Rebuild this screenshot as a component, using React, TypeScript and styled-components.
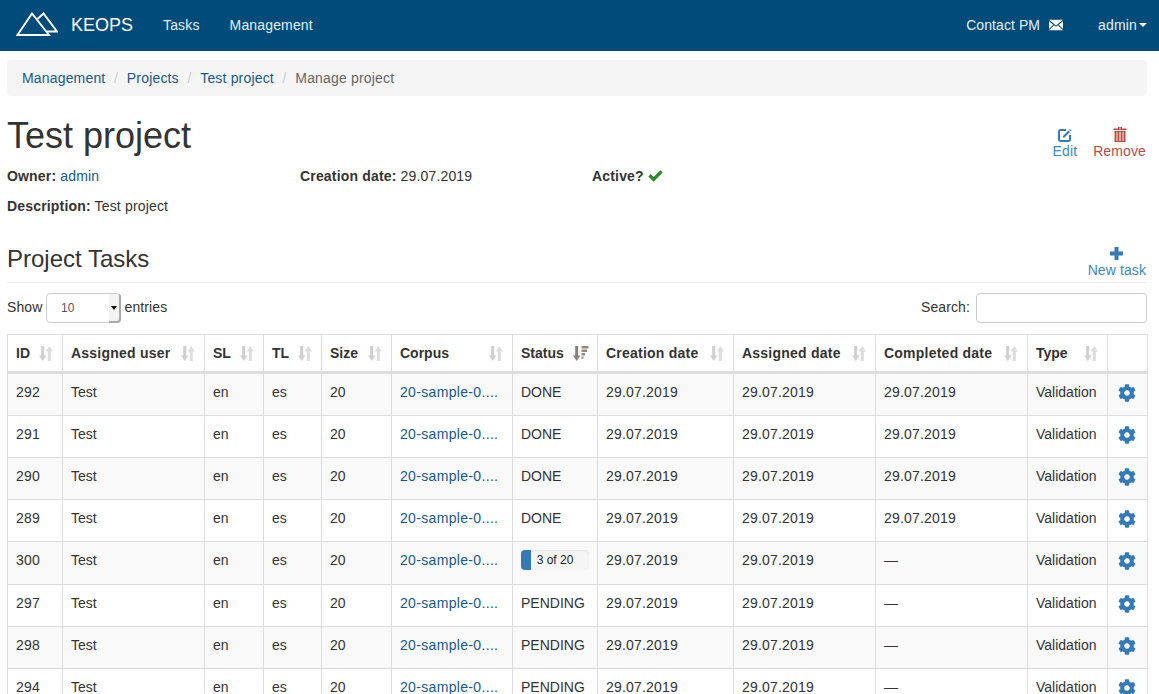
import React from "react";
import styled, { createGlobalStyle } from "styled-components";
import { FaCog } from "react-icons/fa";

const Global = createGlobalStyle`
  html, body { margin: 0; padding: 0; height: 694px; overflow: hidden; background: #fff; }
  body { font-family: "Liberation Sans", Arial, sans-serif; font-size: 14px; line-height: 20px; color: #333; }
  * { box-sizing: border-box; }
`;

const NavBar = styled.nav`
  display: flex; align-items: center; justify-content: space-between;
  height: 51px; background: #004b7a; padding-left: 15px; padding-right: 12px; padding-bottom: 1px;
`;
const NavGroup = styled.div`display: flex; align-items: center;`;
const Brand = styled.a`
  display: flex; align-items: center; gap: 13px; font-size: 18px; color: #fff; padding-right: 15px;
  svg { margin-left: 1px; }
`;
const NavLink = styled.a<{ $gap?: number }>`
  display: flex; align-items: center; gap: ${p => p.$gap ?? 0}px; color: #e3f1fc; padding: 0 15px; letter-spacing: .15px;
`;
const ContactLink = styled(NavLink)`letter-spacing: .08px;`;
const UserLink = styled(NavLink)`padding: 0 0 0 15px; gap: 2px; margin-left: 5px;`;
const Caret = styled.span`
  width: 0; height: 0; border-top: 4px solid #fff; border-left: 4px solid transparent; border-right: 4px solid transparent;
`;

const Page = styled.main`padding: 9px 12px 0 7px;`;
const Crumbs = styled.ol`
  display: flex; list-style: none; margin: 0; height: 36px; align-items: center; padding: 0 15px;
  background: #f5f5f5; border-radius: 4px; letter-spacing: .17px;
`;
const Crumb = styled.li`
  color: #666;
  a { color: #17598a; }
  & + &::before { content: "/"; color: #ccc; padding: 0 8.7px; }
`;
const TitleRow = styled.div`display: flex; justify-content: space-between; align-items: flex-start; margin-top: 20px;`;
const Title = styled.h1`margin: 0; font-size: 36px; line-height: 40px; font-weight: 500; color: #333;`;
const Actions = styled.div`display: flex; gap: 16px; margin-top: 11px; margin-right: 1px;`;
const Action = styled.a<{ $danger?: boolean }>`
  display: flex; flex-direction: column; align-items: center; color: ${p => (p.$danger ? "#b94a48" : "#3d88c4")};
  line-height: 17px; letter-spacing: .12px;
  svg { display: block; }
`;
const Meta = styled.div`display: grid; grid-template-columns: 293px 292px 1fr; height: 20px; margin-top: 6px; letter-spacing: .17px;`;
const MetaItem = styled.div`
  display: flex; align-items: center; gap: 4px;
  a { color: #17598a; }
  b { font-weight: 700; }
`;
const Desc = styled.div`margin-top: 10px; letter-spacing: .17px; b { font-weight: 700; }`;
const SectionHead = styled.div`
  display: flex; justify-content: space-between; align-items: flex-end;
  margin-top: 20px; height: 47px; border-bottom: 1px solid #eee; padding-bottom: 4px;
`;
const SectionTitle = styled.h2`margin: 0 0 6px; font-size: 24px; line-height: 26px; font-weight: 500; color: #333;`;
const NewTask = styled.a`
  display: flex; flex-direction: column; align-items: center; color: #3d88c4; line-height: 16px; margin-right: 1px; letter-spacing: .1px;
  svg { display: block; margin-bottom: 2px; }
`;
const Controls = styled.div`display: flex; justify-content: space-between; align-items: center; margin-top: 10px; height: 30px;`;
const ControlLabel = styled.label<{ $gap: number }>`
  display: flex; align-items: flex-start; gap: ${p => p.$gap}px; color: #333; letter-spacing: .1px; line-height: 28px;
`;
const SelectWrap = styled.span`
  position: relative; display: inline-block; width: 74.5px; height: 30px; margin-left: -.4px;
`;
const Select = styled.select`
  appearance: none; width: 100%; height: 100%; padding: 0 0 0 14px; font: 12px "Liberation Sans", Arial, sans-serif;
  color: #5a4f4f; border: 1px solid #ccc; border-radius: 4px; background: #fff; outline: none;
`;
const SelectButton = styled.span`
  position: absolute; top: 1px; right: 0; bottom: 0; width: 12px; background: #f3f3f3;
  border-right: 2px solid #aaa; border-bottom: 2px solid #aaa; border-radius: 0 3px 4px 0;
  display: flex; align-items: center; justify-content: center;
  &::after { content: ""; border-top: 4px solid #111; border-left: 3px solid transparent; border-right: 3px solid transparent; }
`;
const SearchInput = styled.input`
  width: 171px; height: 30px; border: 1px solid #ccc; border-radius: 4px; background: #fff; outline: none;
`;

const Table = styled.table`
  margin-top: 11px; width: 1140px; table-layout: fixed; border-collapse: collapse; border: 1px solid #ddd;
`;
const Th = styled.th<{ $track: number }>`
  border: 1px solid #ddd; border-bottom: 3px solid #ddd; padding: 0 8px; height: 38px; font-weight: 700; text-align: left; vertical-align: middle;
  letter-spacing: ${p => p.$track}px;
`;
const ThInner = styled.div`display: flex; justify-content: space-between; align-items: center;`;
const Row = styled.tr<{ $striped: boolean }>`background: ${p => (p.$striped ? "#f9f9f9" : "#fff")};`;
const Td = styled.td<{ $track?: number }>`
  border: 1px solid #ddd; padding: 8px; vertical-align: top; white-space: nowrap; color: #333;
  letter-spacing: ${p => p.$track ?? 0}px;
  a { color: #17598a; }
`;
const Gear = styled.div`
  height: 25px; display: flex; align-items: flex-start; padding: 2px 0 0 2px; color: #337ab7;
`;
const Progress = styled.div`
  position: relative; height: 20px; border-radius: 4px; background: #f5f5f5; overflow: hidden; width: 68px;
  box-shadow: inset 0 1px 2px rgba(0,0,0,.08); margin-bottom: 6px;
`;
const ProgressBar = styled.div`height: 100%; background: #337ab7;`;
const ProgressText = styled.span`
  position: absolute; inset: 0; display: flex; align-items: center; justify-content: center; font-size: 12px; color: #222;
`;

const Logo = () => (
  <svg width="42" height="26" viewBox="0 0 42 26" fill="none" stroke="#fff" strokeWidth="1.9">
    <path d="M16 1.5 L1.5 23 H33 Z" />
    <path d="M21.5 7 L27.5 1.5 L41 19.5 H31" />
  </svg>
);
const Envelope = () => (
  <svg width="14" height="12" viewBox="0 0 15 12" fill="#fff">
    <path d="M0 0.5 H15 L7.5 6.5 Z" />
    <path d="M0 2 V10 L4.6 5.6 Z" />
    <path d="M15 2 V10 L10.4 5.6 Z" />
    <path d="M0 11.5 L5.4 6.4 L7.5 8 L9.6 6.4 L15 11.5 Z" />
  </svg>
);
const EditIcon = () => (
  <svg width="16" height="16" viewBox="0 0 16 16" fill="none">
    <path d="M9 3 H3.5 A1.5 1.5 0 0 0 2 4.5 V12.5 A1.5 1.5 0 0 0 3.5 14 H11.5 A1.5 1.5 0 0 0 13 12.5 V8" stroke="#337ab7" strokeWidth="2" />
    <path d="M6 9 L11.5 3.5 L13 5 L7.5 10.5 H6 Z" fill="#337ab7" />
    <path d="M13 2 L14.5 3.5 L13.7 4.3 L12.2 2.8 Z" fill="#337ab7" />
  </svg>
);
const TrashIcon = () => (
  <svg width="14" height="16" viewBox="0 0 14 16" fill="#b94a48">
    <path d="M5 0 H9 V1.5 H13.5 V3 H0.5 V1.5 H5 Z M6 .8 V1.5 H8 V.8 Z" />
    <path d="M1.5 4 H12.5 V15 H1.5 Z M3 5 V14 H4.4 V5 Z M6.3 5 V14 H7.7 V5 Z M9.6 5 V14 H11 V5 Z" fillRule="evenodd" />
    <path d="M3 5 H4.4 V14 H3 Z M6.3 5 H7.7 V14 H6.3 Z M9.6 5 H11 V14 H9.6 Z" fill="#e0a58f" />
  </svg>
);
const PlusIcon = () => (
  <svg width="13" height="13" viewBox="0 0 13 13" fill="#337ab7">
    <path d="M4.5 0 H8.5 V4.5 H13 V8.5 H8.5 V13 H4.5 V8.5 H0 V4.5 H4.5 Z" />
  </svg>
);
const Check = () => (
  <svg width="15" height="12" viewBox="0 0 15 12" fill="#2b8a2b">
    <path d="M0.3 6.4 L2.6 4.1 L5.6 7.1 L12.4 0.3 L14.7 2.6 L5.6 11.7 Z" />
  </svg>
);
const SortBoth = () => (
  <svg width="14" height="15" viewBox="0 0 14 15" style={{ flex: "none", marginRight: 1 }}>
    <path d="M2.2 0 H5.2 V9.5 H7.4 L3.7 15 L0 9.5 H2.2 Z" fill="#d0d0d0" />
    <path d="M8.8 15 H11.8 V5.5 H14 L10.3 0 L6.6 5.5 H8.8 Z" fill="#dedede" />
  </svg>
);
const SortDesc = () => (
  <svg width="16" height="15" viewBox="0 0 16 15" style={{ flex: "none" }}>
    <path d="M2.2 0 H5.2 V9.5 H7.4 L3.7 15 L0 9.5 H2.2 Z" fill="#8a8178" />
    <path d="M8.5 0 H15.5 V2.5 H8.5 Z M8.5 3.6 H14 V6 H8.5 Z M8.5 7 H12 V9.4 H8.5 Z M8.5 10.5 H10.5 V12.8 H8.5 Z" fill="#96897c" />
  </svg>
);

const widths = [55, 142, 59, 58, 70, 121, 85, 136, 142, 152, 80, 40];
const headers = ["ID", "Assigned user", "SL", "TL", "Size", "Corpus", "Status", "Creation date", "Assigned date", "Completed date", "Type", ""];

type TaskRow = { id: number; status: string; completed: string; progress?: number };
const rows: TaskRow[] = [
  { id: 292, status: "DONE", completed: "29.07.2019" },
  { id: 291, status: "DONE", completed: "29.07.2019" },
  { id: 290, status: "DONE", completed: "29.07.2019" },
  { id: 289, status: "DONE", completed: "29.07.2019" },
  { id: 300, status: "3 of 20", completed: "—", progress: 15 },
  { id: 297, status: "PENDING", completed: "—" },
  { id: 298, status: "PENDING", completed: "—" },
  { id: 294, status: "PENDING", completed: "—" },
];

export default function App() {
  return (
    <>
      <Global />
      <NavBar>
        <NavGroup>
          <Brand><Logo />KEOPS</Brand>
          <NavLink>Tasks</NavLink>
          <NavLink>Management</NavLink>
        </NavGroup>
        <NavGroup>
          <ContactLink $gap={9}>Contact PM <Envelope /></ContactLink>
          <UserLink>admin<Caret /></UserLink>
        </NavGroup>
      </NavBar>
      <Page>
        <Crumbs>
          <Crumb><a>Management</a></Crumb>
          <Crumb><a>Projects</a></Crumb>
          <Crumb><a>Test project</a></Crumb>
          <Crumb>Manage project</Crumb>
        </Crumbs>
        <TitleRow>
          <Title>Test project</Title>
          <Actions>
            <Action><EditIcon />Edit</Action>
            <Action $danger><TrashIcon />Remove</Action>
          </Actions>
        </TitleRow>
        <Meta>
          <MetaItem><b>Owner:</b><a>admin</a></MetaItem>
          <MetaItem><b>Creation date:</b>29.07.2019</MetaItem>
          <MetaItem><b>Active?</b><Check /></MetaItem>
        </Meta>
        <Desc><b>Description:</b> Test project</Desc>
        <SectionHead>
          <SectionTitle>Project Tasks</SectionTitle>
          <NewTask><PlusIcon />New task</NewTask>
        </SectionHead>
        <Controls>
          <ControlLabel $gap={4}>
            Show
            <SelectWrap>
              <Select defaultValue="10"><option>10</option><option>25</option></Select>
              <SelectButton />
            </SelectWrap>
            entries
          </ControlLabel>
          <ControlLabel $gap={6}>Search: <SearchInput /></ControlLabel>
        </Controls>
        <Table>
          <colgroup>
            {widths.map((w, i) => <col key={i} style={{ width: w }} />)}
          </colgroup>
          <thead>
            <tr>
              {headers.map((h, i) => (
                <Th key={i} $track={h.includes(" ") ? 0.23 : 0}>
                  {h && <ThInner>{h}{h === "Status" ? <SortDesc /> : <SortBoth />}</ThInner>}
                </Th>
              ))}
            </tr>
          </thead>
          <tbody>
            {rows.map((r, i) => (
              <Row key={r.id} $striped={i % 2 === 0}>
                <Td $track={0.2}>{r.id}</Td>
                <Td>Test</Td>
                <Td>en</Td>
                <Td>es</Td>
                <Td>20</Td>
                <Td $track={0.33}><a>20-sample-0....</a></Td>
                <Td>
                  {r.progress !== undefined ? (
                    <Progress>
                      <ProgressBar style={{ width: `${r.progress}%` }} />
                      <ProgressText>{r.status}</ProgressText>
                    </Progress>
                  ) : r.status}
                </Td>
                <Td $track={0.2}>29.07.2019</Td>
                <Td $track={0.2}>29.07.2019</Td>
                <Td $track={0.2}>{r.completed}</Td>
                <Td>Validation</Td>
                <Td><Gear><FaCog size={18} /></Gear></Td>
              </Row>
            ))}
          </tbody>
        </Table>
      </Page>
    </>
  );
}
